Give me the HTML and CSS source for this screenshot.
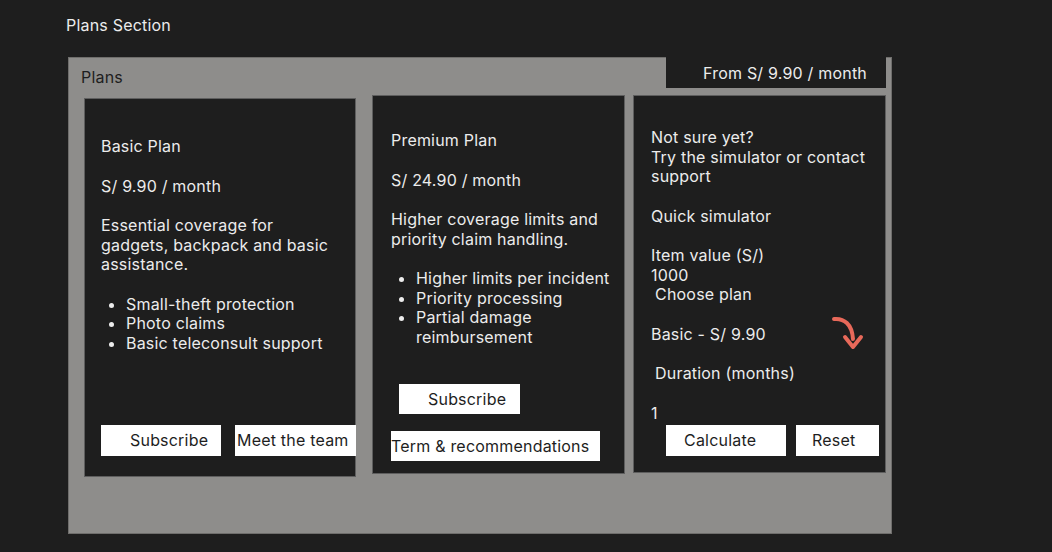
FILE: index.html
```html
<!DOCTYPE html>
<html lang="en">
<head>
  <meta charset="UTF-8" />
  <meta name="viewport" content="width=device-width, initial-scale=1.0"/>
  <title>Plans Section</title>
  <link rel="stylesheet" href="styles.css">
</head>
<body>
  <section class="section">
    <h2 class="section-title">Plans Section</h2>

    <div class="panel">
      <div class="panel-label">Plans</div>
      <div class="panel-tab">From S/ 9.90 / month</div>

      <div class="cards">
        <div class="card card-basic">
          <p>Basic Plan</p>
          <p>S/ 9.90 / month</p>
          <p>Essential coverage for gadgets, backpack and basic assistance.</p>
          <ul>
            <li>Small-theft protection</li>
            <li>Photo claims</li>
            <li>Basic teleconsult support</li>
          </ul>
          <div class="actions actions-basic">
            <button class="btn btn-subscribe">Subscribe</button>
            <button class="btn btn-team">Meet the team</button>
          </div>
        </div>

        <div class="card card-premium">
          <p>Premium Plan</p>
          <p>S/ 24.90 / month</p>
          <p>Higher coverage limits and priority claim handling.</p>
          <ul>
            <li>Higher limits per incident</li>
            <li>Priority processing</li>
            <li>Partial damage reimbursement</li>
          </ul>
          <div class="actions actions-premium">
            <button class="btn btn-subscribe btn-indent">Subscribe</button>
            <button class="btn btn-terms">Term &amp; recommendations</button>
          </div>
        </div>

        <div class="card card-sim">
          <p>Not sure yet?<br>Try the simulator or contact support</p>
          <p>Quick simulator</p>
          <p>Item value (S/)<br>1000<br><span class="label-pad">Choose plan</span></p>
          <p>Basic - S/ 9.90</p>
          <p><span class="label-pad">Duration (months)</span></p>
          <p>1</p>
          <svg class="sim-arrow" width="34" height="36" viewBox="0 0 34 36" fill="none">
            <path d="M3 4 C13 3 21 9 22 24" stroke="#e8695a" stroke-width="4" stroke-linecap="round"/>
            <path d="M14 22 L22 32 L30 22" stroke="#e8695a" stroke-width="4" stroke-linecap="round" stroke-linejoin="round"/>
          </svg>
          <div class="actions actions-sim">
            <button class="btn btn-calc">Calculate</button>
            <button class="btn btn-reset">Reset</button>
          </div>
        </div>
      </div>
    </div>
  </section>
</body>
</html>
```

FILE: styles.css
```css
body {
  margin: 0;
  background-color: #1e1e1e;
  color: #ececec;
  font-family: 'Inter', 'Liberation Sans', sans-serif;
  font-size: 16px;
  line-height: 19.5px;
  letter-spacing: 0.2px;
}
.section {
  padding: 16px 0 0 66px;
}
.section-title {
  margin: 0 0 21px;
  font-size: 16px;
  font-weight: normal;
  line-height: 19.5px;
}
.panel {
  position: relative;
  box-sizing: border-box;
  width: 824px;
  height: 477px;
  margin-left: 2px;
  padding: 10px 5px 0 15px;
  background-color: #8e8d8b;
  border: 1px solid #6f6e6c;
}
.panel-label {
  color: #1e1e1e;
  margin: 0 0 8px -3px;
}
.panel-tab {
  position: absolute;
  top: -1px;
  right: 5px;
  width: 220px;
  height: 31px;
  box-sizing: border-box;
  padding: 1px 19px 0 0;
  line-height: 31px;
  text-align: right;
  background-color: #1e1e1e;
}
.cards {
  display: flex;
  align-items: flex-start;
}
.card {
  position: relative;
  display: flex;
  flex-direction: column;
  box-sizing: border-box;
  background-color: #1e1e1e;
  border: 1px solid #5e5e5e;
}
.card p {
  margin: 0 0 20px;
}
.card ul {
  margin: 0;
  padding-left: 25px;
}
.card-basic {
  width: 272px;
  height: 379px;
  margin-top: 3px;
  margin-right: 16px;
  padding: 38px 18px 20px 16px;
}
.card-premium {
  width: 253px;
  height: 379px;
  margin-right: 8px;
  padding: 35px 8px 12px 18px;
}
.card-sim {
  width: 253px;
  height: 378px;
  padding: 32px 8px 16px 17px;
}
.card-sim p {
  margin-bottom: 20px;
}
.card-sim p:last-of-type {
  margin-bottom: 0;
}
.label-pad {
  padding-left: 4px;
}
.sim-arrow {
  position: absolute;
  left: 197px;
  top: 219px;
}
.actions {
  margin-top: auto;
  display: flex;
}
.btn {
  box-sizing: border-box;
  height: 31px;
  padding: 1px 0 0;
  border: none;
  background-color: #ffffff;
  color: #1e1e1e;
  font-family: inherit;
  font-size: 16px;
  line-height: 19.5px;
  letter-spacing: 0.2px;
  text-align: left;
  flex-shrink: 0;
}
.actions-basic {
  gap: 14px;
}
.btn-subscribe {
  width: 120px;
  padding-left: 29px;
}
.btn-team {
  width: 121px;
  padding-left: 2px;
}
.actions-premium {
  flex-direction: column;
  align-items: flex-start;
  gap: 17px;
}
.btn-indent {
  width: 121px;
  height: 30px;
  margin-left: 8px;
}
.btn-terms {
  width: 209px;
  height: 30px;
}
.actions-sim {
  gap: 10px;
  margin-left: 15px;
}
.btn-calc {
  width: 120px;
  padding-left: 18px;
}
.btn-reset {
  width: 83px;
  padding-left: 16px;
}
```
